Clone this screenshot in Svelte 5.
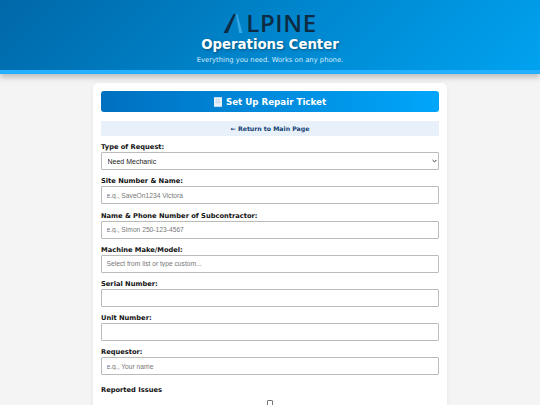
<script>
  const fields = [
    { label: 'Site Number & Name:', placeholder: 'e.g., SaveOn1234 Victora' },
    { label: 'Name & Phone Number of Subcontractor:', placeholder: 'e.g., Simon 250-123-4567' },
    { label: 'Machine Make/Model:', placeholder: 'Select from list or type custom...' },
    { label: 'Serial Number:', placeholder: '' },
    { label: 'Unit Number:', placeholder: '' },
    { label: 'Requestor:', placeholder: 'e.g., Your name' }
  ];
</script>

<div class="page">
  <header>
    <div class="logo">
      <svg class="mark" viewBox="0 0 20 20" width="20" height="19" aria-hidden="true">
        <polygon points="0,20 10.5,0 13,0 4.5,20" fill="#0d2c44" />
        <polygon points="13,0 14.5,0 20,20 16.5,20" fill="#35a8e6" />
      </svg>
      <span>LPINE</span>
    </div>
    <h1>Operations Center</h1>
    <p>Everything you need. Works on any phone.</p>
  </header>

  <main>
    <div class="title">
      <svg viewBox="0 0 10 12" width="8" height="10" aria-hidden="true">
        <rect width="10" height="12" fill="#e8f1f8" />
        <path d="M2 3h5M2 5h6M2 7h6" stroke="#a9c6dc" stroke-width="0.7" />
      </svg>
      <span>Set Up Repair Ticket</span>
    </div>
    <a class="back" href="#top">← Return to Main Page</a>

    <div class="field">
      <label for="type">Type of Request:</label>
      <div class="select-wrap">
        <select id="type"><option>Need Mechanic</option></select>
        <svg class="chev" viewBox="0 0 6 4" width="5" height="4" aria-hidden="true">
          <path d="M0.7 0.8 3 3.1 5.3 0.8" fill="none" stroke="#222" stroke-width="1.1" />
        </svg>
      </div>
    </div>

    {#each fields as f, i}
      <div class="field">
        <label for={'f' + i}>{f.label}</label>
        <input id={'f' + i} type="text" placeholder={f.placeholder} />
      </div>
    {/each}

    <div class="issues">Reported Issues</div>
    <div class="check"><input type="checkbox" aria-label="Issue" /></div>
  </main>
</div>

<style>
  :global(body) {
    margin: 0;
    background: #f4f4f4;
    font-family: "DejaVu Sans", Verdana, sans-serif;
    overflow: hidden;
  }
  .page {
    height: 405px;
    overflow: hidden;
  }
  header {
    box-sizing: border-box;
    height: 74px;
    padding-top: 13px;
    text-align: center;
    color: #fff;
    background: linear-gradient(135deg, #0068a8, #00a2f0);
    border-bottom: 4px solid #24b0ff;
    box-shadow: 0 3px 6px rgba(0, 0, 0, 0.25);
  }
  .logo {
    display: flex;
    justify-content: center;
    align-items: center;
    height: 20px;
    gap: 3px;
    color: #0d2c44;
    font-family: "Open Sans", sans-serif;
    font-size: 24px;
    letter-spacing: 0.6px;
    line-height: 20px;
    font-weight: 600;
  }
  h1 {
    margin: 3px 0 0;
    font-size: 13.3px;
    line-height: 18px;
    font-weight: 700;
    text-shadow: 1px 1px 3px rgba(0, 0, 0, 0.4);
  }
  header p {
    margin: 1px 0 0;
    font-size: 6.8px;
    line-height: 10px;
    color: #d5ecfb;
  }
  main {
    box-sizing: border-box;
    width: 354px;
    margin: 9px auto 0;
    padding: 8px;
    background: #fff;
    border-radius: 5px;
    box-shadow: 0 1px 5px rgba(0, 0, 0, 0.06);
  }
  .title {
    display: flex;
    justify-content: center;
    align-items: center;
    gap: 4px;
    height: 21px;
    border-radius: 3px;
    color: #fff;
    font-size: 8.7px;
    font-weight: 700;
    background: linear-gradient(90deg, #0070c0, #00a6fa);
  }
  .back {
    display: block;
    margin-top: 9px;
    height: 15px;
    line-height: 15px;
    text-align: center;
    background: #e8f1fa;
    color: #123f73;
    font-size: 6.2px;
    font-weight: 700;
    text-decoration: none;
  }
  .field {
    margin-top: 6.2px;
  }
  label {
    display: block;
    height: 10px;
    line-height: 10px;
    font-size: 6.7px;
    font-weight: 700;
    color: #111;
  }
  .select-wrap {
    position: relative;
  }
  .chev {
    position: absolute;
    right: 2px;
    top: 7px;
  }
  input[type='text'],
  select {
    display: block;
    box-sizing: border-box;
    width: 100%;
    height: 18px;
    margin: 0;
    padding: 0 4.5px;
    border: 1px solid #bbb;
    border-radius: 1px;
    background: #fff;
    color: #222;
    font-family: "Liberation Sans", Arial, sans-serif;
    font-size: 6.7px;
  }
  select {
    appearance: none;
    padding: 0 5.5px;
    font-size: 7px;
  }
  input::placeholder {
    color: #777;
  }
  .issues {
    margin-top: 10px;
    font-size: 6.7px;
    line-height: 10px;
    font-weight: 700;
    color: #111;
  }
  .check {
    margin-top: 5px;
    text-align: center;
    line-height: 0;
  }
  .check input {
    appearance: none;
    box-sizing: border-box;
    width: 6px;
    height: 6px;
    margin: 0;
    background: #fff;
    border: 1px solid #767676;
    border-radius: 1px;
  }
</style>
